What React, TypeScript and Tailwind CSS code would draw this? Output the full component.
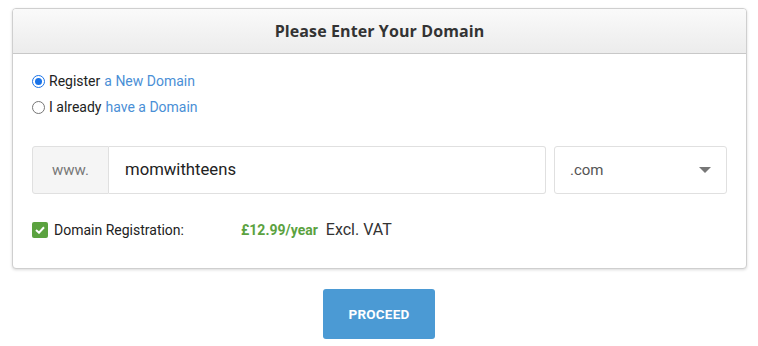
import React from "react";

export default function App() {
  return (
    <div className="w-[758px] h-[346px] bg-white" style={{ fontFamily: "Roboto, 'Liberation Sans', sans-serif" }}>
      <div className="pt-[8px] px-[12px]">
        <div className="w-[735px] h-[261px] rounded-[4px] border border-[#cfcfcf] shadow-[0_1px_3px_rgba(0,0,0,0.15)] overflow-hidden bg-white">
          <div className="h-[45px] flex items-center justify-center bg-gradient-to-b from-[#fafafa] to-[#ececec] border-b border-[#c8c8c8]">
            <span className="text-[16px] font-bold text-[#333] tracking-[0.1px]" style={{ fontFamily: "'Open Sans', sans-serif" }}>
              Please Enter Your Domain
            </span>
          </div>
          <div className="px-[19px] pt-[19px]">
            <div className="flex flex-col gap-[10px] text-[14px] text-[#222]">
              <label className="flex items-center h-[16px]">
                <span className="w-[13px] h-[13px] rounded-full border border-[#1a73e8] bg-white flex items-center justify-center mr-[4px]">
                  <span className="w-[7px] h-[7px] rounded-full bg-[#1a73e8]" />
                </span>
                <span>Register</span>
                <span className="text-[#4a8fd6] ml-[4px]">a New Domain</span>
              </label>
              <label className="flex items-center h-[16px]">
                <span className="w-[13px] h-[13px] rounded-full border border-[#767676] bg-white mr-[4px]" />
                <span>I already</span>
                <span className="text-[#4a8fd6] ml-[4px]">have a Domain</span>
              </label>
            </div>
            <div className="flex mt-[31px] gap-[8px]">
              <div className="flex h-[48px] w-[514px]">
                <div className="w-[77px] bg-[#f5f5f5] border border-[#e0e0e0] rounded-l-[3px] flex items-center justify-center text-[15px] text-[#777]">
                  www.
                </div>
                <div className="flex-1 border border-l-0 border-[#e0e0e0] rounded-r-[3px] flex items-center pl-[16px] text-[16.7px] text-[#222]">
                  momwithteens
                </div>
              </div>
              <div className="w-[173px] h-[48px] border border-[#e0e0e0] rounded-[3px] flex items-center justify-between pl-[15px] pr-[15px] text-[15px] text-[#555]">
                <span>.com</span>
                <svg width="12" height="7" viewBox="0 0 12 7">
                  <path d="M0 0 L12 0 L6 6 Z" fill="#777" />
                </svg>
              </div>
            </div>
            <div className="flex items-center mt-[27px] h-[18px]">
              <span className="w-[16px] h-[16px] rounded-[2px] bg-[#5ba23f] flex items-center justify-center mr-[6px]">
                <svg width="10" height="8" viewBox="0 0 10 8">
                  <path d="M1 4 L4 6.7 L9 1.3" stroke="white" strokeWidth="2" fill="none" />
                </svg>
              </span>
              <span className="text-[14px] text-[#222] w-[187px]">Domain Registration:</span>
              <span className="text-[14px] font-bold text-[#5ba23f] mr-[8px]">£12.99/year</span>
              <span className="text-[16px] text-[#333]">Excl. VAT</span>
            </div>
          </div>
        </div>
      </div>
      <div className="flex justify-center mt-[20px]">
        <button className="w-[112px] h-[50px] rounded-[3px] bg-[#4b9ad4] text-white text-[13.5px] font-bold tracking-[0.2px]">
          PROCEED
        </button>
      </div>
    </div>
  );
}
